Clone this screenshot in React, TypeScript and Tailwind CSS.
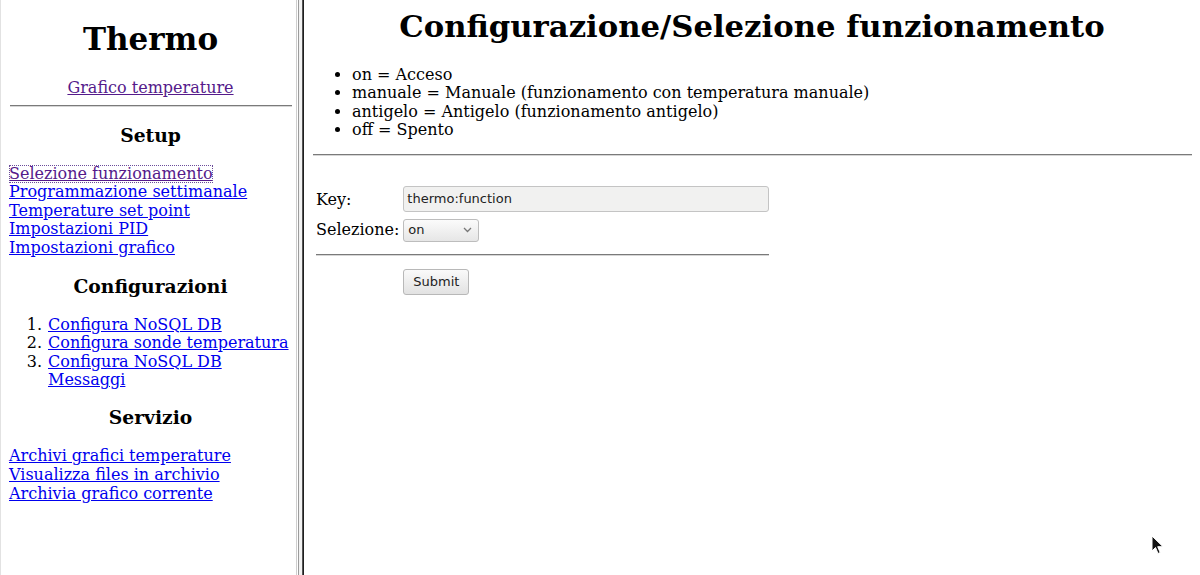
const serif = "font-['DejaVu_Serif','Liberation_Serif',serif]";
const sans = "font-['DejaVu_Sans','Liberation_Sans',sans-serif]";

const setupLinks = [
  "Programmazione settimanale",
  "Temperature set point",
  "Impostazioni PID",
  "Impostazioni grafico",
];

const configLinks = ["Configura NoSQL DB", "Configura sonde temperatura", "Configura NoSQL DB Messaggi"];

const servizioLinks = ["Archivi grafici temperature", "Visualizza files in archivio", "Archivia grafico corrente"];

const modes = [
  "on = Acceso",
  "manuale = Manuale (funzionamento con temperatura manuale)",
  "antigelo = Antigelo (funzionamento antigelo)",
  "off = Spento",
];

function Rule({ className = "" }: { className?: string }) {
  return <div className={`h-[2px] border-t border-t-[#7a7a7a] border-b border-b-[#d6d6d6] ${className}`} />;
}

function Sidebar() {
  return (
    <div className={`w-[296px] shrink-0 h-full border-l border-l-[#e2e2e2] pl-[8px] pr-[4px] text-[16px] leading-[18.6px] text-black ${serif}`}>
      <h1 className="mt-[21px] text-center text-[31px] leading-[37px] font-bold">Thermo</h1>
      <p className="mt-[21px] text-center">
        <a className="text-[#551a8b] underline">Grafico temperature</a>
      </p>
      <Rule className="mt-[7px] ml-[1px]" />
      <h3 className="mt-[17px] text-center text-[18.72px] leading-[22px] font-bold">Setup</h3>
      <div className="mt-[19px] flex flex-col items-start">
        <a className="text-[#551a8b] underline outline outline-1 outline-dotted outline-[#6b4c9a] -outline-offset-1">
          Selezione funzionamento
        </a>
        {setupLinks.map((l) => (
          <a key={l} className="text-[#0000ee] underline">
            {l}
          </a>
        ))}
      </div>
      <h3 className="mt-[17px] text-center text-[18.72px] leading-[22px] font-bold">Configurazioni</h3>
      <ol className="mt-[19px] pl-[39px]">
        {configLinks.map((l, i) => (
          <li key={l} className="flex">
            <span className="w-0 shrink-0 flex justify-end">
              <span className="pr-[6px]">{i + 1}.</span>
            </span>
            <a className="text-[#0000ee] underline">{l}</a>
          </li>
        ))}
      </ol>
      <h3 className="mt-[16.5px] text-center text-[18.72px] leading-[22px] font-bold">Servizio</h3>
      <div className="mt-[19px] flex flex-col items-start">
        {servizioLinks.map((l) => (
          <a key={l} className="text-[#0000ee] underline">
            {l}
          </a>
        ))}
      </div>
    </div>
  );
}

function Separator() {
  return (
    <div className="flex h-full shrink-0">
      <div className="w-px bg-[#cfcfcf]" />
      <div className="w-px bg-white" />
      <div className="w-px bg-[#9c9c9c]" />
      <div className="w-[3px] bg-[#f2f2f2]" />
      <div className="w-px bg-[#555]" />
      <div className="w-px bg-[#1e1e1e]" />
    </div>
  );
}

function Main() {
  return (
    <div className={`flex-1 h-full px-[8px] text-[16px] leading-[18.6px] text-black ${serif}`}>
      <h1 className="mt-[8px] text-center text-[30.7px] leading-[37px] font-bold">
        Configurazione/Selezione funzionamento
      </h1>
      <ul className="mt-[20.5px] pl-[40px] list-disc">
        {modes.map((m) => (
          <li key={m}>{m}</li>
        ))}
      </ul>
      <Rule className="mt-[14px] ml-[1px]" />
      <table className="mt-[28px] ml-[1px] border-separate border-spacing-[2px]">
        <tbody>
          <tr>
            <td className="w-[83px] px-[1px] pt-[2px] align-middle">Key:</td>
            <td className="px-[1px]">
              <input
                readOnly
                value="thermo:function"
                className={`block w-[366px] h-[26px] px-[3px] bg-[#f1f1f0] border border-[#c4c4c4] rounded-[3px] text-[13px] text-[#222] ${sans}`}
              />
            </td>
          </tr>
          <tr>
            <td className="px-[1px] pt-[5px] align-middle">Selezione:</td>
            <td className="px-[1px] pt-[5px]">
              <div
                className={`flex items-center justify-between w-[76px] h-[23px] pl-[4px] pr-[6px] border border-[#bdbdbd] rounded-[3px] bg-gradient-to-b from-[#fbfbfb] to-[#e6e6e6] text-[13px] text-[#222] ${sans}`}
              >
                <span>on</span>
                <svg width="9" height="6" viewBox="0 0 9 6" fill="none">
                  <path d="M1 1l3.5 3.5L8 1" stroke="#777" strokeWidth="1.3" />
                </svg>
              </div>
            </td>
          </tr>
          <tr>
            <td colSpan={2} className="pt-[10px] pb-[11px] px-[1px]">
              <Rule />
            </td>
          </tr>
          <tr>
            <td />
            <td className="px-[1px]">
              <button
                className={`w-[66px] h-[26px] border border-[#b8b8b8] rounded-[3px] bg-gradient-to-b from-[#fafafa] to-[#e2e2e2] text-[13px] text-[#222] ${sans}`}
              >
                Submit
              </button>
            </td>
          </tr>
        </tbody>
      </table>
    </div>
  );
}

export default function App() {
  return (
    <div className="relative flex w-[1200px] h-[575px] overflow-hidden bg-white">
      <Sidebar />
      <Separator />
      <Main />
      <svg className="absolute left-[1151px] top-[535px]" width="13" height="20" viewBox="0 0 13 20">
        <path d="M1 1v15l3.5-3.5 2.5 6 2.2-1-2.5-5.8H12z" fill="#111" stroke="#fff" strokeWidth="1" />
      </svg>
    </div>
  );
}
